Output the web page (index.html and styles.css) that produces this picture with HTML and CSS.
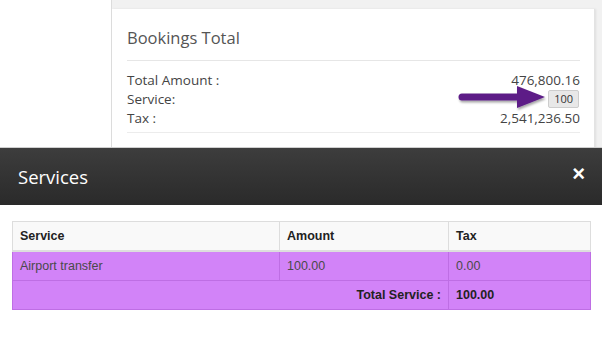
FILE: index.html
```html
<!DOCTYPE html>
<html lang="en">
<head>
    <meta charset="UTF-8">
    <meta name="viewport" content="width=device-width, initial-scale=1.0">
    <title>Bookings Total</title>
    <link rel="stylesheet" href="styles.css">
</head>
<body>
    <div class="page">
        <div class="sidebar"></div>
        <div class="content">
            <div class="card">
                <h3 class="card-title">Bookings Total</h3>
                <div class="totals">
                    <div class="total-row">
                        <span>Total Amount :</span>
                        <span>476,800.16</span>
                    </div>
                    <div class="total-row">
                        <span>Service:</span>
                        <button class="badge">100</button>
                    </div>
                    <div class="total-row">
                        <span>Tax :</span>
                        <span>2,541,236.50</span>
                    </div>
                </div>
                <svg class="arrow" width="96" height="30" viewBox="0 0 96 30">
                    <defs>
                        <filter id="shadow" x="-10%" y="-20%" width="130%" height="160%">
                            <feDropShadow dx="1" dy="2" stdDeviation="1.2" flood-color="#000" flood-opacity="0.35"/>
                        </filter>
                    </defs>
                    <g filter="url(#shadow)">
                        <line x1="5" y1="14" x2="64" y2="14" stroke="#5d1f87" stroke-width="7" stroke-linecap="round"/>
                        <polygon points="60,3 88,14 60,25" fill="#5d1f87"/>
                    </g>
                </svg>
            </div>
        </div>
    </div>

    <div class="modal">
        <div class="modal-header">
            <h2>Services</h2>
            <span class="close">&times;</span>
        </div>
        <div class="modal-body">
            <table class="services">
                <thead>
                    <tr>
                        <th class="col-service">Service</th>
                        <th class="col-amount">Amount</th>
                        <th>Tax</th>
                    </tr>
                </thead>
                <tbody>
                    <tr>
                        <td>Airport transfer</td>
                        <td>100.00</td>
                        <td>0.00</td>
                    </tr>
                    <tr class="total">
                        <td colspan="2" class="total-label">Total Service :</td>
                        <td>100.00</td>
                    </tr>
                </tbody>
            </table>
        </div>
    </div>
</body>
</html>
```

FILE: styles.css
```css
body {
    margin: 0;
    background-color: #fff;
    font-family: "Open Sans", sans-serif;
}

.page {
    display: flex;
    height: 147px;
    border-bottom: 1px solid #cfcfcf;
}

.sidebar {
    width: 111px;
    background-color: #fff;
}

.content {
    flex: 1;
    background-color: #f1f1f1;
    border-left: 1px solid #dcdcdc;
    padding: 9px 7px 0 0;
    overflow: hidden;
}

.card {
    position: relative;
    background-color: #fff;
    border-right: 1px solid #e3e3e3;
    box-shadow: 1px 0 2px rgba(0, 0, 0, 0.08);
    height: 150px;
    padding: 0 14px 0 15px;
}

.card-title {
    margin: 0;
    padding: 18px 0 11px;
    font-size: 16.5px;
    font-weight: 400;
    line-height: 22px;
    color: #555;
    border-bottom: 1px solid #e6e6e6;
}

.totals {
    padding: 9px 0 5px;
    border-bottom: 1px solid #ececec;
}

.total-row {
    display: flex;
    justify-content: space-between;
    align-items: center;
    height: 19px;
    font-size: 13.5px;
    color: #444;
}

.badge {
    font-family: "Open Sans", sans-serif;
    font-size: 11px;
    line-height: 15px;
    color: #333;
    background-color: #e8e8e8;
    border: 1px solid #cdcdcd;
    border-radius: 2px;
    padding: 0 5px;
    height: 18px;
    margin-right: 1px;
}

.arrow {
    position: absolute;
    left: 345px;
    top: 74px;
}

.modal-header {
    display: flex;
    justify-content: space-between;
    align-items: center;
    height: 57px;
    padding: 0 17px 0 18px;
    background: linear-gradient(#3d3d3d, #2a2a2a);
    color: #fff;
}

.modal-header h2 {
    margin: 0;
    font-size: 18.5px;
    font-weight: 400;
}

.close {
    font-family: "Liberation Sans", Arial, sans-serif;
    font-size: 22px;
    font-weight: bold;
    line-height: 1;
    margin-top: -6px;
}

.modal-body {
    padding: 16px 11px 0 12px;
}

.services {
    width: 100%;
    border-collapse: collapse;
    font-family: "Liberation Sans", Arial, sans-serif;
    font-size: 12.5px;
    border: 1px solid #ddd;
}

.services th,
.services td {
    text-align: left;
    padding: 0 7px;
    height: 28px;
    border: 1px solid #c9c9c9;
}

.services th {
    background-color: #f9f9f9;
    color: #222;
    border-color: #ddd;
    border-bottom: 2px solid #ddd;
}

.col-service {
    width: 252px;
}

.col-amount {
    width: 154px;
}

.services td {
    background-color: #d283f8;
    color: #4a4a4a;
    border-color: #be6ee4;
}

.services .total td {
    font-weight: bold;
    color: #222;
}

.services .total-label {
    text-align: right;
}
```
